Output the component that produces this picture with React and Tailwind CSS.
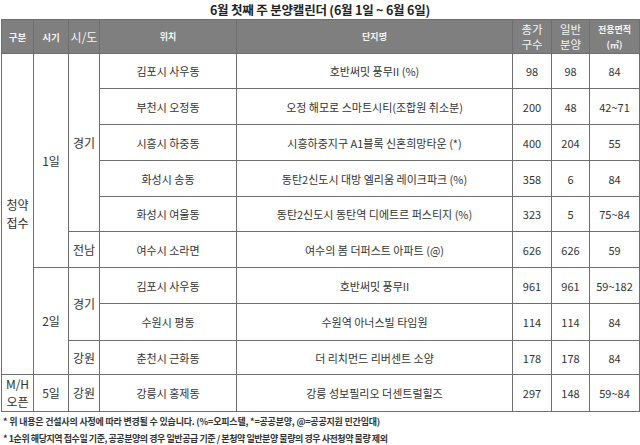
import React from "react"

const FONT = { fontFamily: '"Malgun Gothic", "Noto Sans CJK KR", "Noto Sans", sans-serif' }

// calendar rows; a span cell only appears on the first row it covers
const rows = [
  { h: "h-[35px]", kind: { text: "청약\n접수", span: 9 }, day: { text: "1일", span: 6 }, area: { text: "경기", span: 5 }, loc: "김포시 사우동", name: "호반써밋 풍무II (%)", total: "98", general: "98", size: "84" },
  { h: "h-[36px]", loc: "부천시 오정동", name: "오정 해모로 스마트시티(조합원 취소분)", total: "200", general: "48", size: "42~71" },
  { h: "h-[36px]", loc: "시흥시 하중동", name: "시흥하중지구 A1블록 신혼희망타운 (*)", total: "400", general: "204", size: "55" },
  { h: "h-[36px]", loc: "화성시 송동", name: "동탄2신도시 대방 엘리움 레이크파크 (%)", total: "358", general: "6", size: "84" },
  { h: "h-[35px]", loc: "화성시 여울동", name: "동탄2신도시 동탄역 디에트르 퍼스티지 (%)", total: "323", general: "5", size: "75~84" },
  { h: "h-[36px]", area: { text: "전남", span: 1 }, loc: "여수시 소라면", name: "여수의 봄 더퍼스트 아파트 (@)", total: "626", general: "626", size: "59" },
  { h: "h-[36px]", day: { text: "2일", span: 3 }, area: { text: "경기", span: 2 }, loc: "김포시 사우동", name: "호반써밋 풍무II", total: "961", general: "961", size: "59~182" },
  { h: "h-[37px]", loc: "수원시 평동", name: "수원역 아너스빌 타임원", total: "114", general: "114", size: "84" },
  { h: "h-[34px]", area: { text: "강원", span: 1 }, loc: "춘천시 근화동", name: "더 리치먼드 리버센트 소양", total: "178", general: "178", size: "84" },
  { h: "h-[36px]", kind: { text: "M/H\n오픈", span: 1 }, day: { text: "5일", span: 1 }, area: { text: "강원", span: 1 }, loc: "강릉시 홍제동", name: "강릉 성보필리오 더센트럴힐즈", total: "297", general: "148", size: "59~84" },
]

const cell = "border border-[#6f6f6f] p-0 text-center align-middle"

const SpanCell = ({ data }) => (
  <td rowSpan={data.span} className={`${cell} whitespace-pre-line leading-[18px] text-[12px]`}>
    {data.text}
  </td>
)

export default function App() {
  return (
    <div className="w-[640px] h-[445px] bg-white text-[#333] overflow-hidden" style={FONT}>
      <div className="h-[19px] flex items-center justify-center text-[12.5px] leading-[16px] font-bold text-[#222] tracking-[-0.2px]">
        6월 첫째 주 분양캘린더 (6월 1일 ~ 6월 6일)
      </div>

      <table className="ml-[1px] w-[638px] table-fixed border-collapse text-[11px] leading-[14px]">
        <colgroup>
          <col className="w-[32px]" />
          <col className="w-[35px]" />
          <col className="w-[31px]" />
          <col className="w-[137px]" />
          <col className="w-[276px]" />
          <col className="w-[39px]" />
          <col className="w-[38px]" />
          <col className="w-[50px]" />
        </colgroup>
        <thead>
          <tr className="h-[34px] bg-[#7f7f7f] text-[#f4f4f4]">
            <th className={`${cell} text-[9.5px] font-bold`}>구분</th>
            <th className={`${cell} text-[9.5px] font-bold`}>시기</th>
            <th className={`${cell} text-[12px] font-normal`}>시/도</th>
            <th className={`${cell} text-[9px] font-bold`}>위치</th>
            <th className={`${cell} text-[9px] font-bold`}>단지명</th>
            <th className={`${cell} text-[11.5px] font-normal leading-[15px]`}>총가<br />구수</th>
            <th className={`${cell} text-[11.5px] font-normal leading-[15px]`}>일반<br />분양</th>
            <th className={`${cell} text-[9px] font-bold leading-[15px]`}>전용면적<br />(㎡)</th>
          </tr>
        </thead>
        <tbody>
          {rows.map((r, i) => (
            <tr key={i} className={r.h}>
              {r.kind && <SpanCell data={r.kind} />}
              {r.day && <SpanCell data={r.day} />}
              {r.area && <SpanCell data={r.area} />}
              <td className={cell}>{r.loc}</td>
              <td className={cell}>{r.name}</td>
              <td className={cell}>{r.total}</td>
              <td className={cell}>{r.general}</td>
              <td className={cell}>{r.size}</td>
            </tr>
          ))}
        </tbody>
      </table>

      <div className="pl-[3px] pt-[1px] text-[9px] font-bold text-[#333] leading-[17px]">
        <p className="tracking-[-0.2px]">* 위 내용은 건설사의 사정에 따라 변경될 수 있습니다. (%=오피스텔, *=공공분양, @=공공지원 민간임대)</p>
        <p className="tracking-[-0.45px]">* 1순위 해당지역 접수일 기준, 공공분양의 경우 일반공급 기준 / 본청약 일반분양 물량의 경우 사전청약 물량 제외</p>
      </div>
    </div>
  )
}
